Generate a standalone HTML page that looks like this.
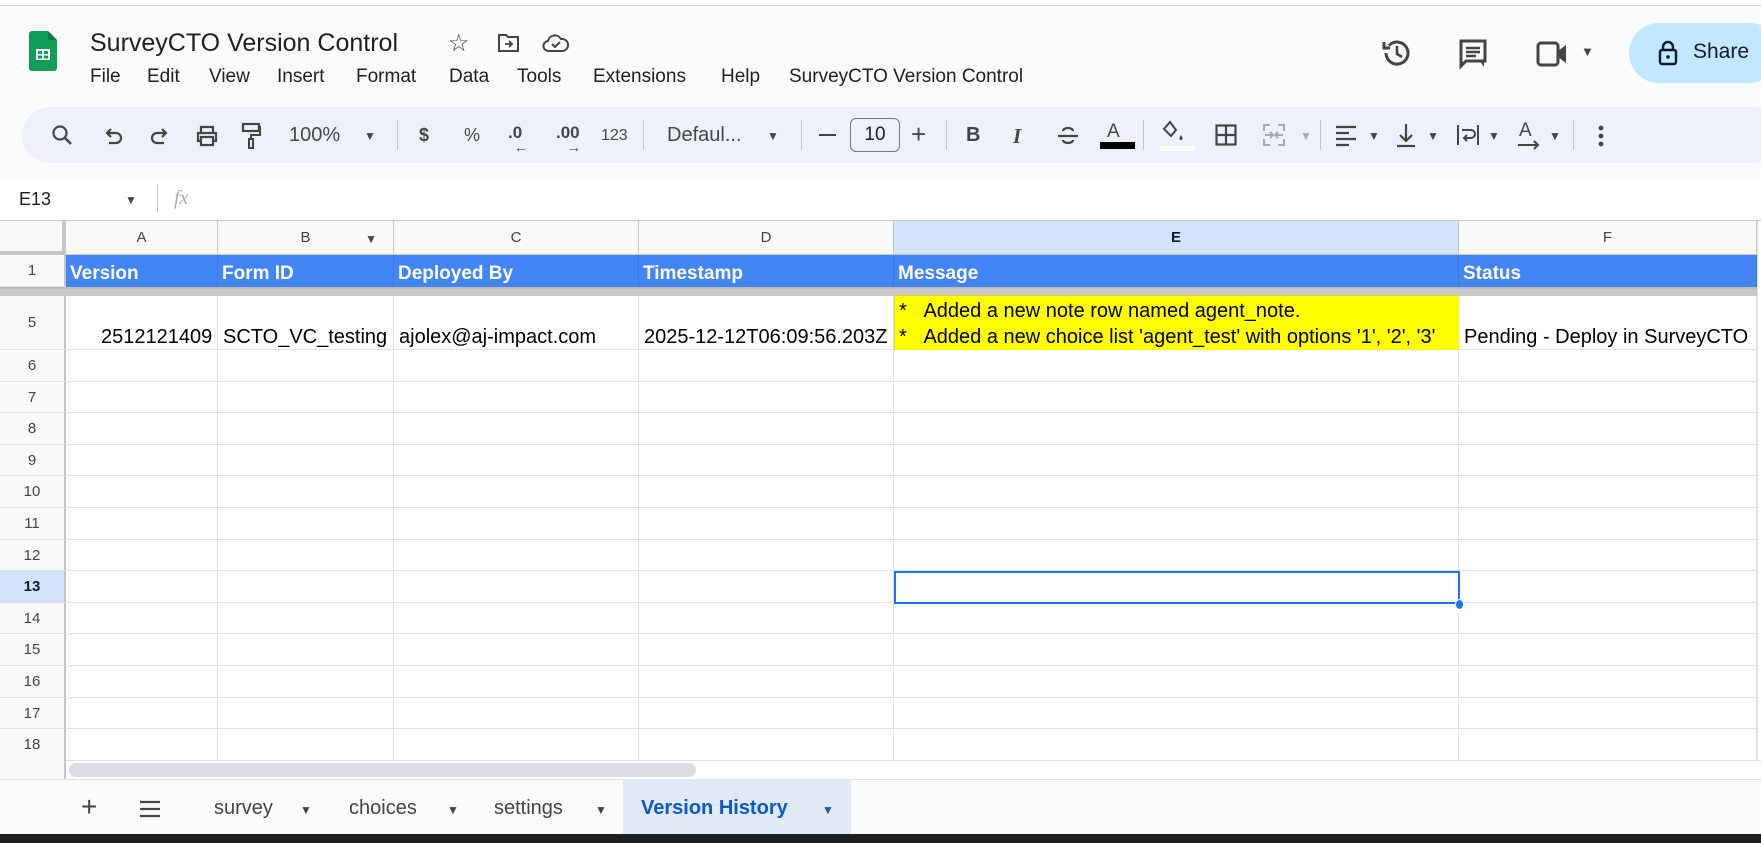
<!DOCTYPE html>
<html><head><meta charset="utf-8"><style>
*{margin:0;padding:0;box-sizing:border-box}
body{width:1761px;height:843px;overflow:hidden;background:#f9fbfd;font-family:"Liberation Sans",Arial,sans-serif;position:relative;color:#1f1f1f}
.a{position:absolute;white-space:nowrap}
.menu{font-size:19px;top:66px;color:#1f1f1f}
.tb{top:123px;font-size:19px;color:#444746}
.sep{position:absolute;top:120px;width:1px;height:30px;background:#c7c7c7}
.cell{position:absolute;border-right:1px solid #e1e1e1;border-bottom:1px solid #e1e1e1;background:#fff}
.rh{position:absolute;left:0;width:66px;background:#f8f9fa;border-right:2px solid #c4c7c5;border-bottom:1px solid #e1e1e1;font-size:15px;color:#444;text-align:center}
.ch{position:absolute;top:221px;height:34px;background:#f8f9fa;border-right:1px solid #c4c7c5;border-bottom:1px solid #c4c7c5;font-size:15px;color:#444;text-align:center;line-height:34px}
.h1{position:absolute;top:255px;height:32px;background:#4285f4;border-right:1px solid #3b78e0;color:#fff;font-weight:bold;font-size:19px;line-height:37px;padding-left:4px}
.v{position:absolute;font-size:20px;color:#000;top:326px}
svg{position:absolute}
</style></head><body>
<div class="a" style="left:0;top:0;width:1761px;height:6px;background:#fff;border-bottom:1px solid #dadce0"></div>
<svg style="left:29px;top:31px" width="28" height="40" viewBox="0 0 28 40"><path d="M3 0h16l9 9v28a3 3 0 0 1-3 3H3a3 3 0 0 1-3-3V3a3 3 0 0 1 3-3z" fill="#0f9d58"/><path d="M19 0l9 9h-7a2 2 0 0 1-2-2z" fill="#0b7a44"/><rect x="7" y="18" width="14" height="11" fill="#fff"/><rect x="9" y="20" width="4" height="3" fill="#0f9d58"/><rect x="15" y="20" width="4" height="3" fill="#0f9d58"/><rect x="9" y="24.5" width="4" height="3" fill="#0f9d58"/><rect x="15" y="24.5" width="4" height="3" fill="#0f9d58"/></svg>
<div class="a" style="left:90px;top:29px;font-size:25px;color:#1f1f1f">SurveyCTO Version Control</div>
<div class="a" style="left:448px;top:29px;font-size:24px;color:#444">☆</div>
<svg style="left:497px;top:33px" width="24" height="20" viewBox="0 0 24 20"><path d="M2 2h7l2 2h10v14H2z" fill="none" stroke="#444" stroke-width="2"/><path d="M8 11h7M12 8l3 3-3 3" fill="none" stroke="#444" stroke-width="1.8"/></svg>
<svg style="left:542px;top:32px" width="28" height="22" viewBox="0 0 28 22"><path d="M7 19a5 5 0 0 1-1-10 7 7 0 0 1 13-2 5.5 5.5 0 0 1 2 12z" fill="none" stroke="#444" stroke-width="2"/><path d="M10 12l3 3 5-5" fill="none" stroke="#444" stroke-width="2"/></svg>
<div class="a menu" style="left:90px">File</div>
<div class="a menu" style="left:147px">Edit</div>
<div class="a menu" style="left:209px">View</div>
<div class="a menu" style="left:277px">Insert</div>
<div class="a menu" style="left:356px">Format</div>
<div class="a menu" style="left:449px">Data</div>
<div class="a menu" style="left:517px">Tools</div>
<div class="a menu" style="left:593px">Extensions</div>
<div class="a menu" style="left:721px">Help</div>
<div class="a menu" style="left:789px">SurveyCTO Version Control</div>
<svg style="left:1381px;top:37px" width="32" height="32" viewBox="0 0 32 32"><path d="M5 16a11 11 0 1 0 3-7.5" fill="none" stroke="#444" stroke-width="3"/><path d="M3 5v6h6" fill="none" stroke="#444" stroke-width="3"/><path d="M16 9v8l5 3" fill="none" stroke="#444" stroke-width="2.6"/></svg>
<svg style="left:1458px;top:38px" width="30" height="32" viewBox="0 0 30 32"><path d="M3 3h24v20H8l-5 5z" fill="none" stroke="#444" stroke-width="3"/><path d="M8 10h14M8 14h14M8 18h10" stroke="#444" stroke-width="2.4"/><path d="M22 23l4 6v-6z" fill="#444"/></svg>
<svg style="left:1536px;top:40px" width="40" height="28" viewBox="0 0 40 28"><rect x="2" y="3" width="20" height="22" rx="3" fill="none" stroke="#444" stroke-width="3"/><path d="M22 11l8-6v18l-8-6z" fill="#444"/></svg>
<div class="a" style="left:1581px;top:44px;font-size:13px;color:#444">▼</div>
<div class="a" style="left:1629px;top:23px;width:150px;height:60px;border-radius:30px;background:#c2e7ff"></div>
<svg style="left:1658px;top:40px" width="20" height="26" viewBox="0 0 20 26"><rect x="2" y="10" width="16" height="14" rx="2" fill="none" stroke="#0b1c2e" stroke-width="2.4"/><path d="M5 10V7a5 5 0 0 1 10 0v3" fill="none" stroke="#0b1c2e" stroke-width="2.4"/><circle cx="10" cy="17" r="1.8" fill="#0b1c2e"/></svg>
<div class="a" style="left:1693px;top:40px;font-size:21px;color:#0b1c2e">Share</div>
<div class="a" style="left:22px;top:107px;width:1760px;height:56px;border-radius:28px;background:#edf2fa"></div>
<svg style="left:51px;top:124px" width="22" height="22" viewBox="0 0 22 22"><circle cx="9" cy="9" r="6.5" fill="none" stroke="#444" stroke-width="2.2"/><path d="M14 14l6 6" stroke="#444" stroke-width="2.4"/></svg>
<svg style="left:103px;top:126px" width="20" height="20" viewBox="0 0 20 20"><path d="M5 7h8a5 5 0 0 1 0 10H6" fill="none" stroke="#444" stroke-width="2.2"/><path d="M8 3L4 7l4 4" fill="none" stroke="#444" stroke-width="2.2"/></svg>
<svg style="left:150px;top:126px" width="20" height="20" viewBox="0 0 20 20"><path d="M15 7H7a5 5 0 0 0 0 10h7" fill="none" stroke="#444" stroke-width="2.2"/><path d="M12 3l4 4-4 4" fill="none" stroke="#444" stroke-width="2.2"/></svg>
<svg style="left:195px;top:124px" width="24" height="24" viewBox="0 0 24 24"><path d="M6 8V3h12v5M6 17H3V9h18v8h-3M6 13h12v8H6z" fill="none" stroke="#444" stroke-width="2.2"/></svg>
<svg style="left:241px;top:122px" width="20" height="28" viewBox="0 0 20 28"><rect x="2" y="2" width="16" height="7" fill="none" stroke="#444" stroke-width="2.2"/><path d="M18 5h1v8h-9v4" fill="none" stroke="#444" stroke-width="2"/><rect x="8" y="17" width="4" height="9" fill="none" stroke="#444" stroke-width="2"/></svg>
<div class="a tb" style="left:289px;font-size:20px;top:124px">100%</div>
<div class="a tb" style="left:364px;font-size:12px;top:129px">▼</div>
<div class="sep" style="left:397px"></div>
<div class="a tb" style="left:419px;font-weight:bold;font-size:18px;top:125px">$</div>
<div class="a tb" style="left:464px;font-size:18px;top:125px">%</div>
<div class="a tb" style="left:508px;font-size:17px;font-weight:bold">.0</div>
<div class="a" style="left:514px;top:139px;font-size:14px;color:#444">←</div>
<div class="a tb" style="left:556px;font-size:17px;font-weight:bold">.00</div>
<div class="a" style="left:567px;top:139px;font-size:14px;color:#444">→</div>
<div class="a tb" style="left:601px;font-size:16px;top:127px">123</div>
<div class="sep" style="left:643px"></div>
<div class="a tb" style="left:667px;font-size:20px;top:124px">Defaul...</div>
<div class="a tb" style="left:767px;font-size:12px;top:129px">▼</div>
<div class="sep" style="left:801px"></div>
<div class="a" style="left:819px;top:134px;width:17px;height:2px;background:#444"></div>
<div class="a" style="left:850px;top:118px;width:50px;height:34px;border:1px solid #747775;border-radius:6px;font-size:19px;text-align:center;line-height:32px;color:#1f1f1f">10</div>
<div class="a tb" style="left:911px;font-size:26px;top:119px">+</div>
<div class="sep" style="left:946px"></div>
<div class="a tb" style="left:966px;font-weight:bold;font-size:20px;color:#444;top:124px">B</div>
<div class="a tb" style="left:1013px;font-style:italic;font-size:21px;font-family:'Liberation Serif',serif;font-weight:bold;top:124px">I</div>
<svg style="left:1056px;top:125px" width="24" height="22" viewBox="0 0 24 22"><path d="M7 6a5 3 0 0 1 10 0M7 15a5 3 0 0 0 10 0" fill="none" stroke="#444" stroke-width="2.2"/><path d="M2 11h20" stroke="#444" stroke-width="2.2"/></svg>
<div class="a tb" style="left:1107px;font-size:19px;top:121px">A</div>
<div class="a" style="left:1100px;top:142px;width:35px;height:7px;background:#000"></div>
<div class="sep" style="left:1143px"></div>
<svg style="left:1160px;top:120px" width="32" height="32" viewBox="0 0 32 32"><path d="M10 2l6 8-5 6-7-7z" fill="none" stroke="#444" stroke-width="2"/><path d="M21 15c-2 3-2 5 0 5s2-2 0-5z" fill="#444"/></svg>
<div class="a" style="left:1160px;top:146px;width:35px;height:5px;background:#fff"></div>
<svg style="left:1215px;top:124px" width="22" height="22" viewBox="0 0 22 22"><rect x="1.5" y="1.5" width="19" height="19" fill="none" stroke="#444" stroke-width="2.2"/><path d="M11 1v20M1 11h20" stroke="#444" stroke-width="2.2"/></svg>
<svg style="left:1263px;top:124px" width="22" height="22" viewBox="0 0 22 22"><path d="M1 7V1h6M15 1h6v6M21 15v6h-6M7 21H1v-6M2 11h7M13 11h7M7 8l3 3-3 3M15 8l-3 3 3 3" fill="none" stroke="#aaa" stroke-width="2"/></svg>
<div class="a" style="left:1300px;top:129px;font-size:12px;color:#aaa">▼</div>
<div class="sep" style="left:1320px"></div>
<svg style="left:1335px;top:125px" width="22" height="22" viewBox="0 0 22 22"><path d="M1 2h20M1 8h13M1 14h20M1 20h13" stroke="#444" stroke-width="2.2"/></svg>
<div class="a" style="left:1368px;top:129px;font-size:12px;color:#444">▼</div>
<svg style="left:1395px;top:122px" width="22" height="26" viewBox="0 0 22 26"><path d="M11 2v17M5 13l6 6 6-6M2 24h18" fill="none" stroke="#444" stroke-width="2.2"/></svg>
<div class="a" style="left:1427px;top:129px;font-size:12px;color:#444">▼</div>
<svg style="left:1456px;top:123px" width="24" height="24" viewBox="0 0 24 24"><path d="M2 2v20M22 2v20M6 7h9a4 4 0 0 1 0 8H9M11 12l-3 3 3 3" fill="none" stroke="#444" stroke-width="2"/></svg>
<div class="a" style="left:1488px;top:129px;font-size:12px;color:#444">▼</div>
<div class="a tb" style="left:1519px;font-size:19px;top:120px">A</div>
<svg style="left:1517px;top:140px" width="24" height="10" viewBox="0 0 24 10"><path d="M1 5h20M17 1l4 4-4 4" fill="none" stroke="#444" stroke-width="2"/></svg>
<div class="a" style="left:1549px;top:129px;font-size:12px;color:#444">▼</div>
<div class="sep" style="left:1573px"></div>
<svg style="left:1598px;top:125px" width="6" height="22" viewBox="0 0 6 22"><circle cx="3" cy="3" r="2.4" fill="#444"/><circle cx="3" cy="11" r="2.4" fill="#444"/><circle cx="3" cy="19" r="2.4" fill="#444"/></svg>
<div class="a" style="left:0;top:178px;width:1761px;height:43px;background:#fff;border-bottom:1px solid #c4c7c5"></div>
<div class="a" style="left:19px;top:189px;font-size:18px;color:#1f1f1f">E13</div>
<div class="a" style="left:125px;top:193px;font-size:12px;color:#444">▼</div>
<div class="a" style="left:157px;top:184px;width:1px;height:28px;background:#c7c7c7"></div>
<div class="a" style="left:174px;top:187px;font-size:20px;font-style:italic;color:#aaa;font-family:'Liberation Serif',serif">fx</div>
<div class="a" style="left:0;top:221px;width:1761px;height:558px;background:#fff"></div>
<div class="a" style="left:0;top:221px;width:66px;height:34px;background:#f8f9fa;border-right:4px solid #c4c7c5;border-bottom:4px solid #c4c7c5"></div>
<div class="ch" style="left:66px;width:152px">A</div>
<div class="ch" style="left:218px;width:176px">B<span style="position:absolute;right:16px;top:1px;font-size:12px">▼</span></div>
<div class="ch" style="left:394px;width:245px">C</div>
<div class="ch" style="left:639px;width:255px">D</div>
<div class="ch" style="left:894px;width:565px;background:#d3e3fd;font-weight:bold;color:#0b1c2e">E</div>
<div class="ch" style="left:1459px;width:298px">F</div>
<div class="rh" style="top:255px;height:32px;line-height:32px">1</div>
<div class="h1" style="left:66px;width:152px">Version</div>
<div class="h1" style="left:218px;width:176px">Form ID</div>
<div class="h1" style="left:394px;width:245px">Deployed By</div>
<div class="h1" style="left:639px;width:255px">Timestamp</div>
<div class="h1" style="left:894px;width:565px">Message</div>
<div class="h1" style="left:1459px;width:298px">Status</div>
<div class="a" style="left:0;top:287px;width:1757px;height:9px;background:#c8c8c8;border-top:2px solid #bcbcbc"></div>
<div class="rh" style="top:296px;height:54px;line-height:54px">5</div>
<div class="cell" style="left:66px;top:296px;width:152px;height:54px"></div>
<div class="cell" style="left:218px;top:296px;width:176px;height:54px"></div>
<div class="cell" style="left:394px;top:296px;width:245px;height:54px"></div>
<div class="cell" style="left:639px;top:296px;width:255px;height:54px"></div>
<div class="cell" style="left:894px;top:295px;width:566px;height:56px;background:#ffff00;border:1px solid #d9d231"></div>
<div class="cell" style="left:1459px;top:296px;width:298px;height:54px"></div>
<div class="v" style="left:101px">2512121409</div>
<div class="v" style="left:223px">SCTO_VC_testing</div>
<div class="v" style="left:399px">ajolex@aj-impact.com</div>
<div class="v" style="left:644px">2025-12-12T06:09:56.203Z</div>
<div class="v" style="left:899px;top:300px">*&nbsp;&nbsp;&nbsp;Added a new note row named agent_note.</div>
<div class="v" style="left:899px;top:326px">*&nbsp;&nbsp;&nbsp;Added a new choice list 'agent_test' with options '1', '2', '3'</div>
<div class="v" style="left:1464px">Pending - Deploy in SurveyCTO</div>
<div id="rows"></div>
<script>
var cols=[[66,152],[218,176],[394,245],[639,255],[894,565],[1459,298]];var h='';
for(var i=0;i<13;i++){var t=350+i*31.6;var n=6+i;var sel=n==13;
h+='<div class="rh" style="top:'+t+'px;height:31.6px;line-height:32px;'+(sel?'background:#d3e3fd;font-weight:bold;color:#0b1c2e':'')+'">'+n+'</div>';
for(var j=0;j<cols.length;j++)h+='<div class="cell" style="left:'+cols[j][0]+'px;top:'+t+'px;width:'+cols[j][1]+'px;height:31.6px"></div>';}
document.getElementById('rows').innerHTML=h;
</script>
<div class="a" style="left:1757px;top:221px;width:4px;height:558px;background:#fff;border-left:1px solid #e1e1e1"></div>
<div class="a" style="left:894px;top:571px;width:566px;height:33px;border:2px solid #1a73e8"></div>
<div class="a" style="left:1455px;top:599px;width:9px;height:11px;border-radius:50%;background:#1a73e8;border:1px solid #fff"></div>
<div class="a" style="left:0;top:760px;width:1761px;height:20px;background:#fff;border-top:1px solid #e1e1e1"></div>
<div class="a" style="left:0;top:760px;width:66px;height:20px;background:#f8f9fa;border-right:2px solid #c4c7c5"></div>
<div class="a" style="left:69px;top:763px;width:627px;height:14px;border-radius:7px;background:#dadce0"></div>
<div class="a" style="left:0;top:779px;width:1761px;height:55px;background:#f9fbfd;border-top:1px solid #e1e1e1"></div>
<div class="a" style="left:81px;top:791px;font-size:28px;color:#444">+</div>
<svg style="left:139px;top:800px" width="22" height="18" viewBox="0 0 22 18"><path d="M1 2h20M1 9h20M1 16h20" stroke="#444" stroke-width="2.2"/></svg>
<div class="a" style="left:214px;top:797px;font-size:20px;color:#444">survey</div>
<div class="a" style="left:300px;top:803px;font-size:12px;color:#444">▼</div>
<div class="a" style="left:349px;top:797px;font-size:20px;color:#444">choices</div>
<div class="a" style="left:447px;top:803px;font-size:12px;color:#444">▼</div>
<div class="a" style="left:494px;top:797px;font-size:20px;color:#444">settings</div>
<div class="a" style="left:595px;top:803px;font-size:12px;color:#444">▼</div>
<div class="a" style="left:623px;top:779px;width:228px;height:55px;background:#e1e9f7"></div>
<div class="a" style="left:641px;top:797px;font-size:20px;color:#0b57d0;font-weight:bold">Version History</div>
<div class="a" style="left:822px;top:803px;font-size:12px;color:#0b57d0">▼</div>
<div class="a" style="left:0;top:834px;width:1761px;height:9px;background:#1f1f1f"></div>
</body></html>
